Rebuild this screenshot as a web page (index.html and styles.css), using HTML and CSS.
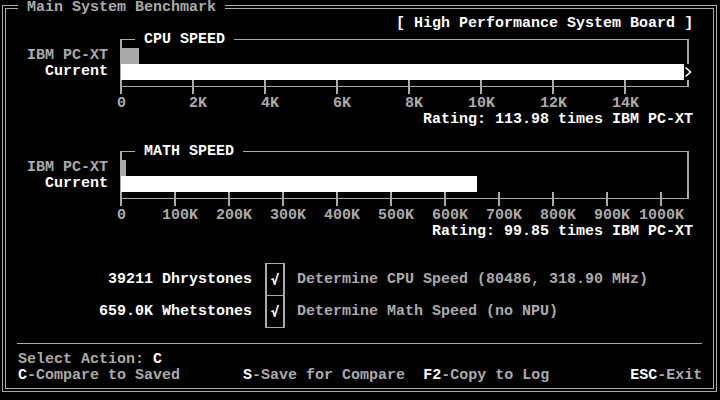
FILE: index.html
```html
<!DOCTYPE html>
<html>
<head>
<meta charset="utf-8">
<link rel="stylesheet" href="styles.css">
</head>
<body>
<div class="screen">
  <div class="frame-outer">
    <div class="frame-inner">
      <div class="content">
        <div class="line">  <span class="cut"> Main System Benchmark </span></div>
        <div class="line">                                            <span class="hi">[ High Performance System Board ]</span></div>

        <section class="chart">
          <div class="side">
            <div class="line"></div>
            <div class="line">   IBM PC-XT</div>
            <div class="line hi">     Current</div>
            <div class="line"></div>
          </div>
          <div class="plot">
            <svg class="plot-svg" width="603" height="64" viewBox="0 0 603 64">
              <g fill="#aaa">
                <rect x="3" y="7" width="569" height="1"/>
                <rect x="3" y="7" width="2" height="55"/>
                <rect x="570" y="7" width="2" height="25"/>
                <rect x="570" y="48" width="2" height="7"/>
                <rect x="3" y="54" width="569" height="1"/>
                <rect x="75" y="48" width="2" height="14"/>
                <rect x="147" y="48" width="2" height="14"/>
                <rect x="219" y="48" width="2" height="14"/>
                <rect x="291" y="48" width="2" height="14"/>
                <rect x="363" y="48" width="2" height="14"/>
                <rect x="435" y="48" width="2" height="14"/>
                <rect x="507" y="48" width="2" height="14"/>
                <rect x="4" y="16" width="18" height="16"/>
              </g>
              <rect x="4" y="32" width="563" height="16" fill="#fff"/>
              <polyline points="568.5,35.5 573.5,40 568.5,44.5" fill="none" stroke="#fff" stroke-width="1.6"/>
            </svg>
            <span class="plot-title"> CPU SPEED </span>
          </div>
        </section>
        <div class="line">             0       2K      4K      6K      8K     10K     12K     14K</div>
        <div class="line">                                               <span class="hi">Rating: 113.98 times IBM PC-XT</span></div>
        <div class="line"></div>

        <section class="chart">
          <div class="side">
            <div class="line"></div>
            <div class="line">   IBM PC-XT</div>
            <div class="line hi">     Current</div>
            <div class="line"></div>
          </div>
          <div class="plot">
            <svg class="plot-svg" width="603" height="64" viewBox="0 0 603 64">
              <g fill="#aaa">
                <rect x="3" y="7" width="569" height="1"/>
                <rect x="3" y="7" width="2" height="55"/>
                <rect x="570" y="7" width="2" height="48"/>
                <rect x="3" y="54" width="569" height="1"/>
                <rect x="57" y="48" width="2" height="14"/>
                <rect x="111" y="48" width="2" height="14"/>
                <rect x="165" y="48" width="2" height="14"/>
                <rect x="219" y="48" width="2" height="14"/>
                <rect x="273" y="48" width="2" height="14"/>
                <rect x="327" y="48" width="2" height="14"/>
                <rect x="381" y="48" width="2" height="14"/>
                <rect x="435" y="48" width="2" height="14"/>
                <rect x="489" y="48" width="2" height="14"/>
                <rect x="543" y="48" width="2" height="14"/>
                <rect x="4" y="16" width="5" height="16"/>
              </g>
              <rect x="4" y="32" width="356" height="16" fill="#fff"/>
            </svg>
            <span class="plot-title"> MATH SPEED </span>
          </div>
        </section>
        <div class="line">             0    100K  200K  300K  400K  500K  600K  700K  800K  900K 1000K</div>
        <div class="line">                                                <span class="hi">Rating: 99.85 times IBM PC-XT</span></div>
        <div class="line"></div>

        <section class="checks">
          <div class="checks-left">
            <div class="line hi">            39211 Dhrystones</div>
            <div class="line"></div>
            <div class="line hi">           659.0K Whetstones</div>
          </div>
          <div class="checkbox">
            <div class="check-cell check-top">√</div>
            <div class="check-cell">√</div>
          </div>
          <div class="checks-right">
            <div class="line">Determine CPU Speed (80486, 318.90 MHz)</div>
            <div class="line"></div>
            <div class="line">Determine Math Speed (no NPU)</div>
          </div>
        </section>

        <div class="rule"></div>
        <div class="line">  Select Action: <span class="hi">C</span></div>
        <div class="line">  <span class="hi">C</span>-Compare to Saved       <span class="hi">S</span>-Save for Compare  <span class="hi">F2</span>-Copy to Log         <span class="hi">ESC</span>-Exit</div>
        <div class="line"></div>
      </div>
    </div>
  </div>
</div>
</body>
</html>
```

FILE: styles.css
```css
html, body {
  margin: 0;
  padding: 0;
  background: #000;
}

.screen {
  width: 720px;
  height: 400px;
  overflow: hidden;
  background: #000;
  color: #aaa;
  font-family: "Liberation Mono", "DejaVu Sans Mono", monospace;
  font-size: 15px;
  line-height: 16px;
  font-weight: bold;
}

.frame-outer {
  margin: 5px 0 0 2px;
  width: 715px;
  height: 387px;
  box-sizing: border-box;
  border: 1px solid #aaa;
  padding: 2px;
}

.frame-inner {
  height: 100%;
  box-sizing: border-box;
  border: 1px solid #aaa;
}

.content {
  margin: -9px 0 0 -6px;
  width: 720px;
  height: 400px;
}

.line {
  height: 16px;
  white-space: pre;
}

.hi {
  color: #fff;
}

.cut {
  background: #000;
}

.chart {
  display: flex;
  height: 64px;
}

.side {
  width: 117px;
  flex: none;
}

.plot {
  position: relative;
  width: 603px;
  height: 64px;
}

.plot-svg {
  display: block;
}

.plot-title {
  position: absolute;
  left: 18px;
  top: 0;
  height: 16px;
  white-space: pre;
  background: #000;
  color: #fff;
}

.checks {
  display: flex;
  height: 80px;
}

.checks-left {
  width: 265px;
  flex: none;
  padding-top: 16px;
}

.checkbox {
  margin-top: 7px;
  width: 20px;
  height: 65px;
  box-sizing: border-box;
  border: 1px solid #aaa;
  border-left-width: 2px;
  border-right-width: 2px;
  display: flex;
  flex-direction: column;
  flex: none;
}

.check-cell {
  height: 31px;
  display: flex;
  align-items: center;
  justify-content: center;
  color: #fff;
  font-family: "DejaVu Sans Mono", "Liberation Mono", monospace;
  font-size: 14px;
}

.check-top {
  height: 32px;
  box-sizing: border-box;
  border-bottom: 1px solid #aaa;
}

.checks-right {
  margin-left: 12px;
  padding-top: 16px;
}

.rule {
  height: 16px;
  box-sizing: border-box;
  padding-top: 7px;
}

.rule::before {
  content: "";
  display: block;
  margin: 0 18px 0 17px;
  border-top: 1px solid #aaa;
}
```
